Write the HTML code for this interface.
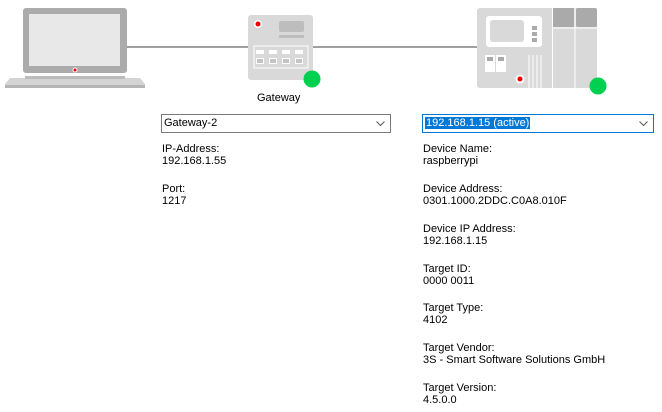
<!DOCTYPE html>
<html><head><style>
body{margin:0;width:662px;height:412px;background:#fff;position:relative;overflow:hidden;font-family:"Liberation Sans","DejaVu Sans",sans-serif;font-size:11px;color:#000}
.a{position:absolute}
.sel{position:absolute;height:19px;border:1px solid #7a7a7a;background:#fff;box-sizing:border-box}
.t{position:absolute;line-height:12px;white-space:nowrap}
.chev{position:absolute;right:5px;top:6px}
</style></head><body>
<svg class="a" style="left:0;top:0" width="662" height="100">
<line x1="126" y1="47" x2="480" y2="47" stroke="#666" stroke-width="1.2"/>
<rect x="23" y="8" width="104" height="65" rx="3" fill="#ababab"/>
<rect x="29" y="14" width="91" height="52" fill="#e8e8e8"/>
<circle cx="75" cy="70" r="2.5" fill="#fff"/><circle cx="75" cy="70" r="1.5" fill="#e00"/>
<path d="M10 78 L140 78 L145 84 L145 88 L5 88 L5 84 Z" fill="#d4d4d4"/>
<rect x="25" y="76" width="100" height="3" fill="#bbb"/>
<rect x="5" y="85" width="140" height="3" fill="#b5b5b5"/>
<rect x="248" y="15" width="65" height="65" rx="3" fill="#d9d9d9"/>
<circle cx="258" cy="24" r="4" fill="#fff"/><circle cx="258" cy="24" r="2.5" fill="#e00"/>
<rect x="279" y="21" width="25" height="11" rx="2" fill="#bdbdbd"/>
<rect x="279" y="35" width="25" height="3" fill="#bdbdbd"/>
<rect x="254" y="46" width="54" height="22" fill="none" stroke="#fff" stroke-width="1"/>
<g fill="#fff"><rect x="256" y="58" width="8" height="6"/><rect x="269" y="58" width="8" height="6"/><rect x="282" y="58" width="8" height="6"/><rect x="295" y="58" width="8" height="6"/>
<rect x="256" y="50" width="8" height="4"/><rect x="269" y="50" width="8" height="4"/><rect x="282" y="50" width="8" height="4"/><rect x="295" y="50" width="8" height="4"/></g>
<g fill="#c4c4c4"><rect x="257" y="59" width="6" height="4"/><rect x="270" y="59" width="6" height="4"/><rect x="283" y="59" width="6" height="4"/><rect x="296" y="59" width="6" height="4"/></g>
<circle cx="312" cy="79" r="8.5" fill="#00d050"/>
<rect x="477" y="8" width="120" height="80" rx="3" fill="#d9d9d9"/>
<rect x="552" y="8" width="22" height="19" fill="#aaa"/><rect x="576" y="8" width="21" height="19" rx="2" fill="#aaa"/>
<line x1="552.5" y1="8" x2="552.5" y2="88" stroke="#fff"/><line x1="575" y1="8" x2="575" y2="88" stroke="#fff"/>
<line x1="552" y1="28" x2="597" y2="28" stroke="#fff"/>
<rect x="486" y="16" width="56" height="31" rx="3" fill="#fff"/>
<rect x="490" y="20" width="34" height="22" rx="3" fill="#d9d9d9"/>
<g fill="#aaa"><rect x="532" y="26" width="5" height="4"/><rect x="532" y="32" width="5" height="4"/><rect x="532" y="38" width="5" height="4"/></g>
<rect x="485" y="55" width="10" height="17" fill="#fff"/><rect x="496" y="55" width="10" height="17" fill="#fff"/>
<rect x="487" y="57" width="6" height="4" fill="#aaa"/><rect x="498" y="57" width="6" height="4" fill="#aaa"/>
<g stroke="#fff"><line x1="529" y1="55" x2="529" y2="88"/><line x1="533" y1="55" x2="533" y2="88"/><line x1="537" y1="55" x2="537" y2="88"/><line x1="541" y1="55" x2="541" y2="88"/></g>
<circle cx="520" cy="79" r="4.5" fill="#fff"/><circle cx="520" cy="79" r="2.5" fill="#e00"/>
<circle cx="598" cy="86" r="8.5" fill="#00d050"/>
</svg>
<div class="t" style="left:257px;top:92px">Gateway</div>
<div class="sel" style="left:161px;top:114px;width:230px"><span class="t" style="left:2px;top:2px">Gateway-2</span><svg class="chev" width="9" height="5"><path d="M0.5 0.5 L4.5 4.5 L8.5 0.5" fill="none" stroke="#555" stroke-width="1"/></svg></div>
<div class="sel" style="left:422px;top:114px;width:232px;border-color:#0078d7"><span class="t" style="left:2px;top:2px;background:#0078d7;color:#fff;padding:0 1px">192.168.1.15 (active)</span><svg class="chev" width="9" height="5"><path d="M0.5 0.5 L4.5 4.5 L8.5 0.5" fill="none" stroke="#555" stroke-width="1"/></svg></div>
<div class="t" style="left:162px;top:143px">IP-Address:<br>192.168.1.55</div>
<div class="t" style="left:162px;top:183px">Port:<br>1217</div>
<div class="t" style="left:423px;top:143px">Device Name:<br>raspberrypi</div>
<div class="t" style="left:423px;top:183px">Device Address:<br>0301.1000.2DDC.C0A8.010F</div>
<div class="t" style="left:423px;top:223px">Device IP Address:<br>192.168.1.15</div>
<div class="t" style="left:423px;top:263px">Target ID:<br>0000 0011</div>
<div class="t" style="left:423px;top:302px">Target Type:<br>4102</div>
<div class="t" style="left:423px;top:342px">Target Vendor:<br>3S - Smart Software Solutions GmbH</div>
<div class="t" style="left:423px;top:382px">Target Version:<br>4.5.0.0</div>
</body></html>
